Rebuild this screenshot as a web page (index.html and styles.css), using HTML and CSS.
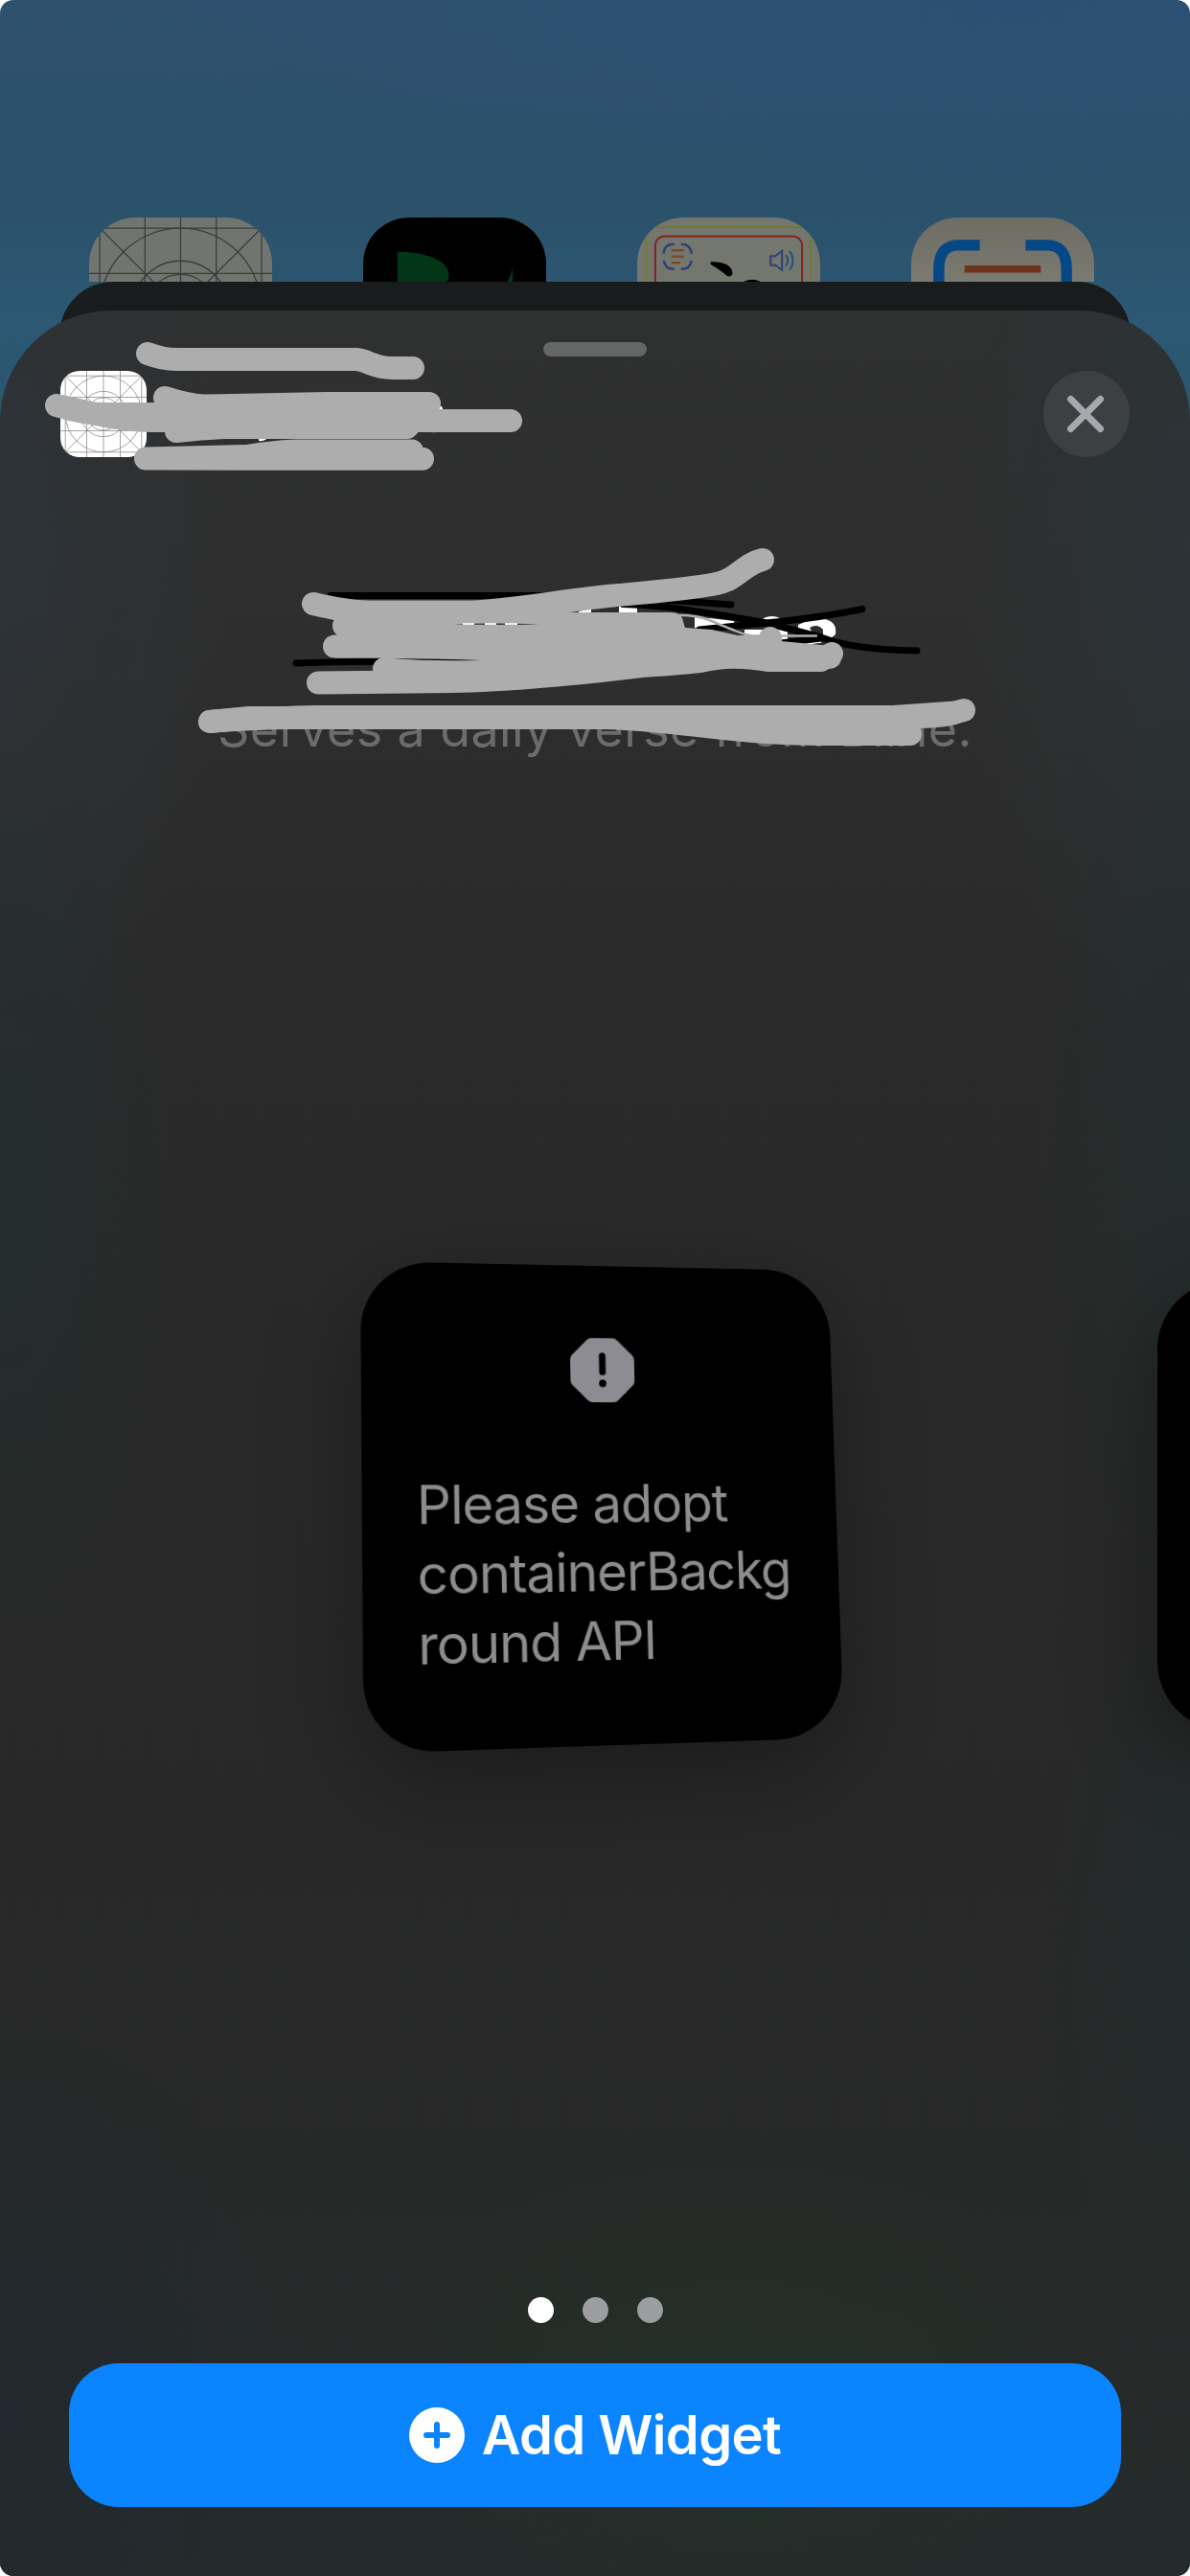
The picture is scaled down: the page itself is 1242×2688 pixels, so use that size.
FILE: index.html
```html
<!DOCTYPE html>
<html lang="en">
<head>
<meta charset="utf-8">
<title>Add Widget</title>
<link rel="stylesheet" href="styles.css">
</head>
<body>
<svg width="0" height="0" class="defs" aria-hidden="true">
  <symbol id="grid" viewBox="0 0 190 190">
    <path d="M11 0V190M58 0V190M95 0V190M132 0V190M179 0V190M0 11H190M0 58H190M0 95H190M0 132H190M0 179H190M11 11L179 179M179 11L11 179"/>
    <circle cx="95" cy="95" r="84"/><circle cx="95" cy="95" r="50"/><circle cx="95" cy="95" r="36"/><circle cx="95" cy="95" r="20"/>
  </symbol>
</svg>
<div class="screen">
  <div class="home">
    <div class="app app-grid"><svg viewBox="0 0 190 190"><use href="#grid"/></svg></div>
    <div class="app app-dark"><svg viewBox="0 0 192 192"><path d="M36 36C62 36 90 44 90 60C90 66 87 69 82 74H36ZM157 52V75H146Q154 66 157 52Z" fill="#033517"/></svg></div>
    <div class="app app-card"><svg viewBox="0 0 192 192" fill="none">
      <path d="M9.500 100V10H182V100" stroke="#717b22" stroke-width="1.500"/>
      <rect x="19" y="19.500" width="154" height="160" rx="10" stroke="#83231f" stroke-width="2"/>
      <g stroke="#303f7a" stroke-width="2.500"><path d="M28 38V36Q29 28 39 28M46 28Q56 28 57 38M28 45Q29 54 39 54M46 54Q56 54 57 45"/><path d="M140 40.500H145L152 35V55L145 50H140Z" stroke-width="2"/><path d="M156 39Q160 45 156 51M160 35Q167 45 160 55" stroke="#1f5080" stroke-width="2"/></g>
      <path d="M36 34.500H49M36 41H49M36 47.500H45" stroke="#84472e" stroke-width="2.500"/>
      <path d="M77 46.500C86 46 100 48 100 59C99 62 97 62 94 61Q90 57 77 49ZM112 67Q121 63 129 67V72H112Z" fill="#000"/>
    </svg></div>
    <div class="app app-scan"><svg viewBox="0 0 192 192" fill="none"><path d="M72 29H48Q29 30 29 54V100M120 29H144Q163 30 163 54V100" stroke="#064785" stroke-width="11.500"/><path d="M56 54H136" stroke="#6d341b" stroke-width="7.500"/></svg></div>
  </div>
  <div class="sheet-back"></div>
  <main class="sheet">
    <div class="grabber"></div>
    <header class="head">
      <div class="mini"><svg viewBox="0 0 190 190"><use href="#grid"/></svg></div>
      <button class="close" aria-label="Close"><svg viewBox="0 0 90 90"><path d="M28.500 29.500L59.500 60.500M59.500 29.500L28.500 60.500"/></svg></button>
    </header>
    <p class="desc">Serves a daily verse from Bible.</p>
    <section class="stage">
      <article class="widget">
        <svg class="alert" viewBox="0 0 70 70"><path d="M24 1H46Q49 1 51 3L67 19Q69 21 69 24V46Q69 49 67 51L51 67Q49 69 46 69H24Q21 69 19 67L3 51Q1 49 1 46V24Q1 21 3 19L19 3Q21 1 24 1Z" fill="#8d8c92"/><path d="M35 20V37" stroke="#000" stroke-width="7" stroke-linecap="round"/><circle cx="35" cy="49" r="3.900"/></svg>
        <p class="msg">Please adopt<br>containerBackg<br>round API</p>
      </article>
      <div class="widget-next"></div>
    </section>
    <nav class="dots"><i class="on"></i><i></i><i></i></nav>
    <button class="add"><svg viewBox="0 0 58 58"><circle cx="29" cy="29" r="29" fill="#fff"/><path d="M29 18V40M18 29H40" stroke="#0a84ff" stroke-width="6" stroke-linecap="round"/></svg><span>Add Widget</span></button>
  </main>
  <svg class="marker" viewBox="0 0 1242 820" fill="none" stroke-linecap="round" stroke-linejoin="round">
    <!-- slivers of the covered names -->
    <path d="M270 455H280Q278 461 270 460ZM444 446H466V450.500H457Q450 453 444 447ZM456 424H461L463 429H456Z" fill="#fff"/>
    <g fill="#fff">
      <path d="M646 633H665V640H646ZM604 638L617 635V640H604ZM725 644L740 645L766 648V653L750 658L725 655ZM777 657H822V668H777ZM797 649V645Q806 641 814 645L813 650Z"/>
      <path d="M833 652Q846 645 861 646Q874 649 872 662L866 667H850L833 658Z"/><path d="M830 673L857 669V677H838Z"/>
    </g>
    <path d="M845 655Q853 650 859 657V664H850ZM842 677Q846 670 858 671L855 677ZM713 642L725 645V656L715 655ZM617 637L646 633V639H617Z" fill="#2c2e2e"/>
    <g stroke="#000" stroke-width="7">
      <path d="M345 621.500H560C640 622 690 626 763 631"/>
      <path d="M650 630.500C690 631 720 637 760 643L800 650L857 665Q890 678 957 679"/>
      <path d="M730 657L800 650Q860 644 900 635.500"/>
      <path d="M815 671L857 666"/>
      <path d="M309 692Q370 690 420 690Q470 690 505 694"/>
    </g>
    <g stroke="#adadad" stroke-width="24">
      <path d="M154 369Q170 375 184 375H372C385 376 388 384 410 384H431"/>
      <path d="M59 423Q88 432 109 432H180M59 423C90 430 125 439 160 439H533"/>
      <path d="M172 415Q200 424 216 423.500Q290 422 341 421H448L425 446H234Q210 447 184 450V435H425" fill="#adadad"/>
      <path d="M152 478.500L257 476Q290 471 309 470.500H430M152 478.500L265 478.700H441M257 476L430 471"/>
      <path d="M327 630Q362 638.500 385 638.500H495C550 635 590 626 640 621.500S725 614 748 609S775 589 796 584"/>
      <path d="M359 653H430M430 640H500L570 634"/>
      <path d="M349 674.500H430"/>
      <path d="M332 712.500L473 711Q560 709 673 694.700Q715 692 733 689.500C760 684 775 685 803 689H857L868 682"/>
      <path d="M401 698H590M804 666V680L866 686"/>
      <path d="M219 753Q250 750 330 748H933Q960 746 997 743.500L1006 741"/>
      <path d="M219 753L260 749H630C700 750 765 766 857 766H950L930 752"/>
      <path d="M997 743.500Q985 748 950 748"/>
    </g>
    <path d="M400 640L620 639H700Q710 639 712 645L715 655L743 657L770 663H795V690L733 695L640 700L480 710H401V686.500H350L359 650Z" fill="#adadad"/>
    <path d="M410 687.300Q450 687 502 689Q450 690 410 687.300Z" fill="#000"/>
    <path d="M473 651.500Q518 649.500 563 651.500Q518 652.500 473 651.500Z" fill="#3a3a3a"/>
    <path d="M483 651H495M506 651H518M527 651H540" stroke="#eee" stroke-width="2" stroke-linecap="butt"/>
    <path d="M710 642Q727 642 740 647L767 658Q775 662 785 663.500H852" stroke="#adadad" stroke-width="2.500"/>
  </svg>
</div>
</body>
</html>
```
FILE: styles.css
```css
* { box-sizing: border-box; }
body { margin: 0; background: #fff; font-family: Inter, "Liberation Sans", sans-serif; }
button { border: 0; padding: 0; font: inherit; }
p { margin: 0; }
.defs { display: block; position: absolute; }
.screen {
  position: relative;
  width: 1242px;
  height: 2688px;
  overflow: hidden;
  border-radius: 14px;
  background: radial-gradient(900px 240px at 1050px 0, #2c5073, transparent), linear-gradient(#2e526e, #2b5069 200px, #2c5873 330px, #29566b 500px);
}
.home { display: flex; gap: 95px; height: 294px; padding: 227px 0 0 93px; overflow: hidden; }
.app { flex: none; width: 191px; height: 191px; border-radius: 48px; overflow: hidden; }
.app svg { display: block; width: 100%; height: 100%; }
.app-grid { background: #71756f; }
.app-grid svg { stroke: #3b3e3a; stroke-width: 1.3; fill: none; }
.app-dark { background: #000; }
.app-card { background: #73776d; }
.app-scan { background: linear-gradient(#6d6d64, #7a7a70 67px); }
.sheet-back {
  position: absolute; left: 62px; right: 62px; top: 294px; height: 200px;
  border-radius: 56px 56px 0 0; background: #191c1c;
}
.sheet {
  position: absolute; inset: 324px 0 0;
  display: flex; flex-direction: column; align-items: center;
  overflow: hidden;
  border-radius: 116px 116px 0 0;
  background:
    radial-gradient(400px 240px at 770px 2170px, rgba(32, 54, 34, .5), transparent),
    radial-gradient(180px 480px at 0 920px, rgba(30, 50, 50, .55), transparent),
    radial-gradient(160px 480px at 1242px 880px, rgba(32, 48, 48, .55), transparent),
    radial-gradient(150px 380px at 1242px 1720px, rgba(32, 46, 47, .6), transparent),
    radial-gradient(240px 560px at 0 240px, rgba(45, 52, 58, .85), transparent),
    radial-gradient(240px 560px at 1242px 240px, rgba(43, 52, 56, .85), transparent),
    radial-gradient(320px 420px at 0 2200px, rgba(32, 40, 48, .8), transparent),
    linear-gradient(#2f3030, #2e2e2e 350px, #2a2a2a 700px, #282928 1100px, #282828 1600px, #272928 1950px, #252b2b 2364px);
}
.grabber { flex: none; width: 108px; height: 15px; margin-top: 33px; border-radius: 8px; background: #656668; }
.head { flex: none; display: flex; justify-content: space-between; align-self: stretch; margin-top: 15px; padding: 0 63px; height: 90px; }
.mini { width: 90px; height: 90px; border-radius: 20px; background: #fff; overflow: hidden; }
.mini svg { display: block; stroke: #888; stroke-width: 1.6; fill: none; }
.close { width: 90px; height: 90px; border-radius: 50%; background: #3d4042; }
.close svg { display: block; stroke: #a7a8ad; stroke-width: 7; stroke-linecap: round; }
.desc { margin-top: 251px; height: 66px; line-height: 66px; font-size: 52px; letter-spacing: .4px; color: #6b6c6e; white-space: nowrap; }
.stage { flex: none; display: flex; align-items: flex-start; align-self: stretch; height: 1603px; padding: 522px 0 0 375px; }
.widget {
  flex: none; width: 500px; height: 500px; border-radius: 72px; background: #000; color: #8d8d8f;
  display: flex; flex-direction: column; align-items: center;
  transform-origin: 0 0;
  transform: matrix3d(1.02914, .02109, 0, .00010888, .0068, .99844, 0, -.00005752, 0, 0, 1, 0, 1, 0, 0, 1);
  box-shadow: 0 30px 100px rgba(0, 0, 0, .32);
}
.alert { flex: none; width: 70px; height: 70px; margin-top: 76px; }
.msg { align-self: stretch; margin-top: 70px; padding-left: 55px; font-size: 55px; line-height: 71px; letter-spacing: -1px; white-space: nowrap; }
.widget-next { flex: none; width: 480px; height: 470px; margin: 20px 0 0 333px; border-radius: 72px; background: #000; box-shadow: 0 25px 90px rgba(0, 0, 0, .35); }
.dots { flex: none; display: flex; gap: 30px; padding-left: 1px; }
.dots i { width: 27px; height: 27px; border-radius: 50%; background: #9c9da1; }
.dots .on { background: #fff; }
.add {
  flex: none; display: flex; align-items: center; justify-content: center; gap: 18px;
  width: 1098px; height: 150px; margin-top: 42px; border-radius: 52px;
  background: #0a84ff; color: #fff; font-size: 56px; font-weight: 600; letter-spacing: -.6px; white-space: nowrap;
}
.add svg { width: 58px; height: 58px; }
.marker { position: absolute; left: 0; top: 0; width: 1242px; height: 820px; }
```
